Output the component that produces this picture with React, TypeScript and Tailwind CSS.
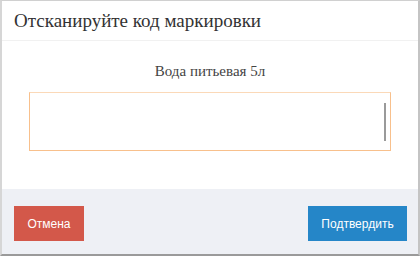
export default function App() {
  return (
    <div className="w-[420px] h-[256px] bg-white flex flex-col border-l-2 border-t border-r-2 border-b-2 border-l-[#d6d6d6] border-t-[#d0d0d0] border-r-[#c4c4c4] border-b-[#9a9a9a] font-[family-name:Liberation_Serif,serif]">
      <div className="h-[40px] shrink-0 border-b border-[#f1f1f1] pl-[12px] flex items-center">
        <h1 className="text-[19px] text-[#333] leading-none">Отсканируйте код маркировки</h1>
      </div>
      <div className="flex-1 flex flex-col items-center pt-[23px] px-[27px]">
        <div className="text-[15px] text-[#444] leading-none">Вода питьевая 5л</div>
        <div className="mt-[13px] self-stretch h-[59px] border border-[#f8c08c] border-t-[#fbd9b8] flex items-center justify-end pr-[4px]">
          <div className="w-[2px] h-[38px] bg-[#9a9a9a]" />
        </div>
      </div>
      <div className="h-[65px] shrink-0 bg-[#eef0f5] flex items-start justify-between pt-[17px] pl-[12px] pr-[11px] font-[family-name:Liberation_Sans,sans-serif]">
        <button type="button" className="w-[70px] h-[35px] bg-[#d3584a] text-white text-[12px]">Отмена</button>
        <button type="button" className="w-[99px] h-[35px] bg-[#2586c8] text-white text-[12px]">Подтвердить</button>
      </div>
    </div>
  )
}
